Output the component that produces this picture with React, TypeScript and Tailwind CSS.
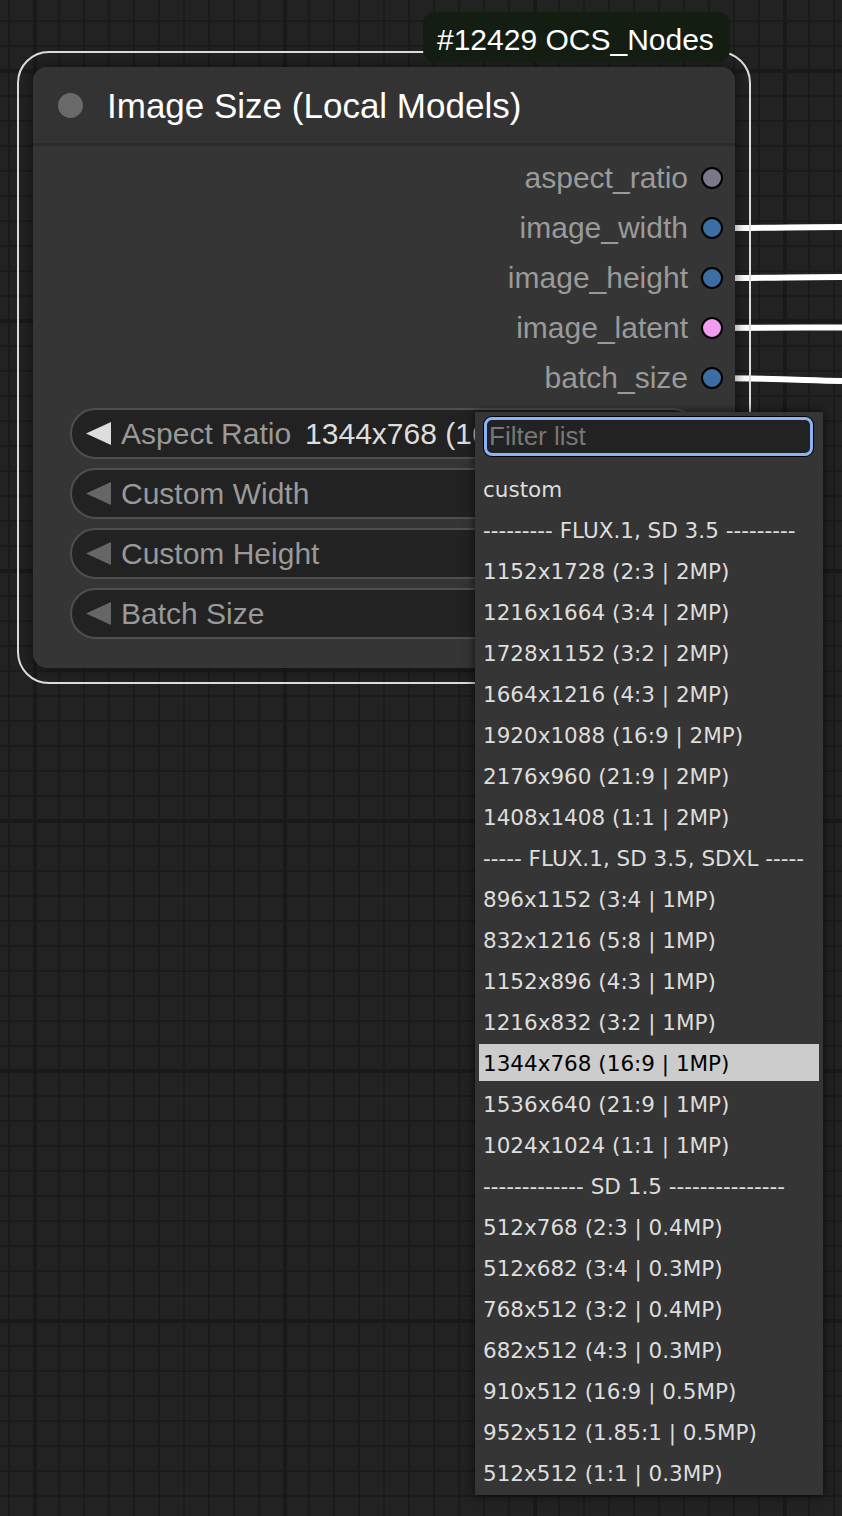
import React from "react";

const outputs = [
  { name: "aspect_ratio", dot: "bg-[#7b788a]" },
  { name: "image_width", dot: "bg-[#3d6ea3]" },
  { name: "image_height", dot: "bg-[#3d6ea3]" },
  { name: "image_latent", dot: "bg-[#f09cf0]" },
  { name: "batch_size", dot: "bg-[#3d6ea3]" },
];

const widgets = [
  { label: "Aspect Ratio", value: "1344x768 (16:9 | 1MP)", active: true },
  { label: "Custom Width", value: "", active: false },
  { label: "Custom Height", value: "", active: false },
  { label: "Batch Size", value: "", active: false },
];

const options = [
  "custom",
  "--------- FLUX.1, SD 3.5 ---------",
  "1152x1728 (2:3 | 2MP)",
  "1216x1664 (3:4 | 2MP)",
  "1728x1152 (3:2 | 2MP)",
  "1664x1216 (4:3 | 2MP)",
  "1920x1088 (16:9 | 2MP)",
  "2176x960 (21:9 | 2MP)",
  "1408x1408 (1:1 | 2MP)",
  "----- FLUX.1, SD 3.5, SDXL -----",
  "896x1152 (3:4 | 1MP)",
  "832x1216 (5:8 | 1MP)",
  "1152x896 (4:3 | 1MP)",
  "1216x832 (3:2 | 1MP)",
  "1344x768 (16:9 | 1MP)",
  "1536x640 (21:9 | 1MP)",
  "1024x1024 (1:1 | 1MP)",
  "------------- SD 1.5 ---------------",
  "512x768 (2:3 | 0.4MP)",
  "512x682 (3:4 | 0.3MP)",
  "768x512 (3:2 | 0.4MP)",
  "682x512 (4:3 | 0.3MP)",
  "910x512 (16:9 | 0.5MP)",
  "952x512 (1.85:1 | 0.5MP)",
  "512x512 (1:1 | 0.3MP)",
];

const selected = "1344x768 (16:9 | 1MP)";

function Arrow({ active }: { active: boolean }) {
  return (
    <svg width="25" height="23" viewBox="0 0 25 23" aria-hidden="true" className="shrink-0">
      <polygon points="0,11.5 25,0 25,23" fill={active ? "#dddddd" : "#666666"} />
    </svg>
  );
}

function Links() {
  return (
    <svg className="absolute left-0 top-0" width="842" height="700" aria-hidden="true">
      <g fill="none" stroke="#ffffff" strokeWidth="6">
        <path d="M712 228 C 770 228, 800 227, 842 227" />
        <path d="M712 278 C 770 278, 800 277, 842 277" />
        <path d="M712 328 C 770 328, 800 327.5, 842 327.5" />
        <path d="M712 378 C 770 378.5, 800 380, 842 381" />
      </g>
    </svg>
  );
}

export default function App() {
  return (
    <div className="relative h-[1516px] w-[842px] overflow-hidden bg-[#222222] bg-[linear-gradient(to_right,#191919_4px,transparent_4px),linear-gradient(to_bottom,#191919_4px,transparent_4px),linear-gradient(to_right,#1b1b1b_2px,transparent_2px),linear-gradient(to_bottom,#1b1b1b_2px,transparent_2px)] bg-size-[250px_250px,250px_250px,25px_25px,25px_25px] bg-position-[33px_0,0_69px,8px_0,0_20px] font-['Liberation_Sans',Arial,sans-serif]">
      <Links />

      {/* selected node */}
      <div className="absolute left-[17px] top-[51px] rounded-[32px] border-2 border-[#dddddd] p-[14px]">
        <div className="flex h-[601px] w-[702px] flex-col overflow-hidden rounded-[14px] bg-[#353535] shadow-[0_0_14px_rgba(0,0,0,0.55)]">
          <div className="flex h-[79px] shrink-0 items-center gap-[24px] border-b-[3px] border-[#2b2b2b] bg-[#333333] pl-[25px]">
            <div className="h-[25px] w-[25px] rounded-full bg-[#6a6a6a]" />
            <div className="text-[35px] leading-none text-white">Image Size (Local Models)</div>
          </div>

          <div className="flex flex-col pt-[7px]">
            {outputs.map((o) => (
              <div key={o.name} className="flex h-[50px] items-center justify-end gap-[13px] pr-[12px]">
                <span className="text-[30px] leading-none text-[#9a9a9a]">{o.name}</span>
                <span className={`h-[22px] w-[22px] rounded-full border-2 border-black ${o.dot}`} />
              </div>
            ))}
          </div>

          <div className="flex flex-col gap-[9px] px-[37px] pt-[5px]">
            {widgets.map((w) => (
              <div
                key={w.label}
                className="flex h-[51px] items-center overflow-hidden whitespace-nowrap rounded-full border-2 border-[#4f4f4f] bg-[#222222] pl-[14px]"
              >
                <Arrow active={w.active} />
                <span className="ml-[10px] text-[30px] leading-none text-[#999999]">{w.label}</span>
                {w.value && <span className="ml-[14px] text-[30px] leading-none text-[#dddddd]">{w.value}</span>}
              </div>
            ))}
          </div>
        </div>
      </div>

      {/* node badge */}
      <div className="absolute left-[423px] top-[12px] flex h-[50px] w-[307px] items-center rounded-[12px] bg-[#131d12] pl-[14px] pt-[5px] text-[30px] leading-none text-white">
        #12429 OCS_Nodes
      </div>

      {/* combo dropdown */}
      <div className="absolute left-[475px] top-[412px] flex h-[1083px] w-[348px] flex-col bg-[#353535] px-[4px] pb-[4px] pt-[5px] shadow-[0_0_10px_rgba(0,0,0,0.7)]">
        <div className="ml-[5px] h-[39px] w-[329px] rounded-[8px] border-[3px] border-[#8ab4f8] bg-[#222222] ring-1 ring-black">
          <input
            readOnly
            placeholder="Filter list"
            className="h-full w-full bg-transparent pl-[2px] text-[26px] leading-none text-[#dddddd] outline-none placeholder:text-[#777777]"
          />
        </div>
        <div className="mt-[14px] flex flex-col gap-[4px] font-['DejaVu_Sans',Verdana,sans-serif] text-[21.5px]">
          {options.map((opt) => (
            <div
              key={opt}
              className={`flex h-[37px] items-center overflow-hidden whitespace-nowrap px-[4px] pt-[3px] ${
                opt === selected ? "bg-[#cccccc] text-black" : "text-[#dddddd]"
              }`}
            >
              {opt}
            </div>
          ))}
        </div>
      </div>
    </div>
  );
}
